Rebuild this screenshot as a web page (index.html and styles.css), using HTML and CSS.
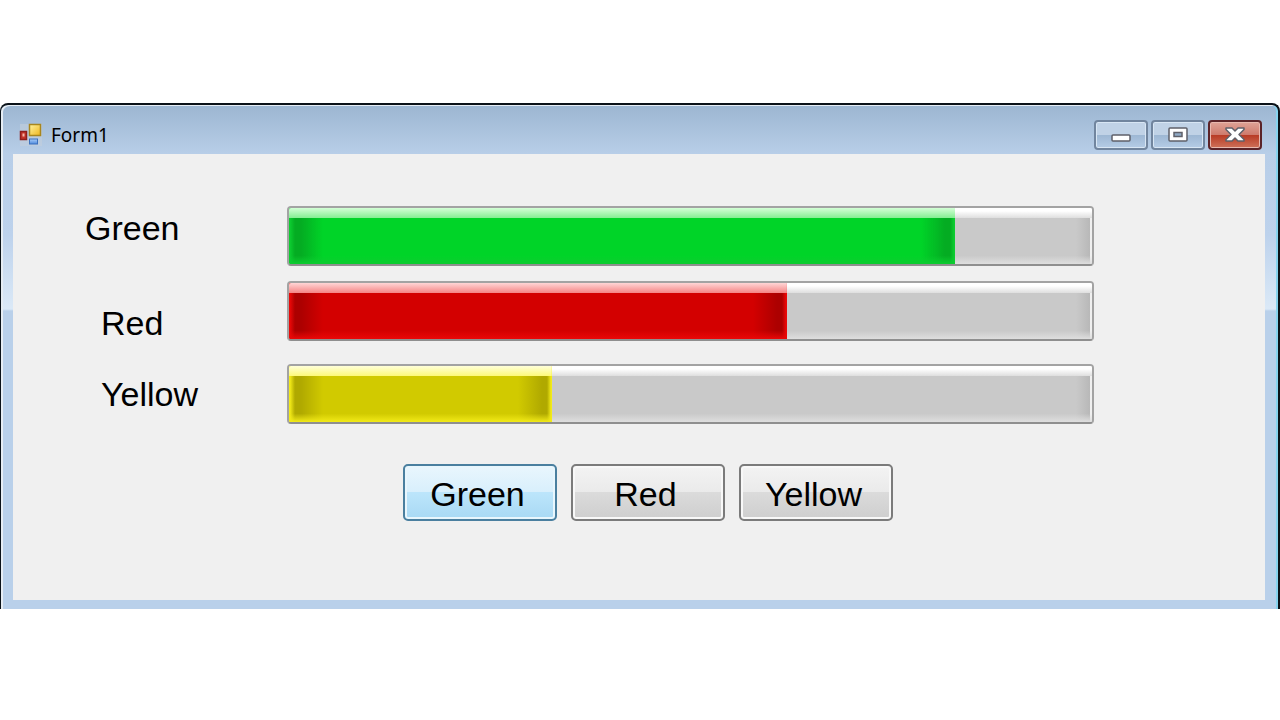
FILE: index.html
```
<!DOCTYPE html>
<html lang="en">
<head>
  <meta charset="UTF-8" />
  <meta name="viewport" content="width=device-width, initial-scale=1.0"/>
  <title>Form1</title>
  <link rel="stylesheet" href="styles.css">
</head>
<body>

  <div class="window">
    <!-- TITLE BAR -->
    <header class="title-bar">
      <svg class="app-icon" width="24" height="24" viewBox="0 0 24 24" aria-hidden="true">
        <defs>
          <linearGradient id="gold" x1="0" y1="0" x2="1" y2="1">
            <stop offset="0" stop-color="#fff3a0"/>
            <stop offset="1" stop-color="#eeb51c"/>
          </linearGradient>
          <linearGradient id="blue" x1="0" y1="0" x2="0" y2="1">
            <stop offset="0" stop-color="#a9cdf7"/>
            <stop offset="1" stop-color="#4f8ade"/>
          </linearGradient>
        </defs>
        <rect x="1" y="1" width="22" height="22" fill="#c3cfdc" opacity="0.6"/>
        <rect x="10.500" y="1.500" width="11" height="11" fill="url(#gold)" stroke="#a8861f" stroke-width="1.500"/>
        <rect x="1.500" y="8.500" width="6" height="8" fill="#c5352a" stroke="#8f1f1c" stroke-width="1.500"/>
        <rect x="3.500" y="10.500" width="2" height="3" fill="#f3b5a8"/>
        <rect x="10.500" y="16" width="8" height="5" fill="url(#blue)" stroke="#3c70bd"/>
      </svg>
      <h1>Form1</h1>
      <div class="controls">
        <button type="button" class="control" aria-label="Minimize">
          <svg width="22" height="20" viewBox="0 0 22 20">
            <rect x="2" y="10" width="18" height="6" rx="1" fill="#fff" stroke="#5f6069" stroke-width="1.5"/>
          </svg>
        </button>
        <button type="button" class="control" aria-label="Maximize">
          <svg width="22" height="20" viewBox="0 0 22 20">
            <rect x="2" y="3" width="18" height="13" rx="1" fill="#fff" stroke="#5f6069" stroke-width="1.5"/>
            <rect x="7" y="7.500" width="8" height="4" fill="#8fa9c5" stroke="#5f6069" stroke-width="1.5"/>
          </svg>
        </button>
        <button type="button" class="control close" aria-label="Close">
          <svg width="22" height="20" viewBox="0 0 22 20">
            <path d="M2 3H8L11 6L14 3H20V4.500L15 9.500L20 14.500V16H14L11 13L8 16H2V14.500L7 9.500L2 4.500Z" fill="#fff" stroke="#5f6069" stroke-width="1.5" stroke-linejoin="round"/>
          </svg>
        </button>
      </div>
    </header>

    <!-- FORM -->
    <main class="client">
      <div class="row row-green">
        <label for="bar-green">Green</label>
        <progress id="bar-green" max="100" value="83"></progress>
      </div>
      <div class="row row-red">
        <label for="bar-red">Red</label>
        <progress id="bar-red" max="100" value="62"></progress>
      </div>
      <div class="row row-yellow">
        <label for="bar-yellow">Yellow</label>
        <progress id="bar-yellow" max="100" value="32.7"></progress>
      </div>

      <div class="buttons">
        <button type="button" class="btn active">Green</button>
        <button type="button" class="btn">Red</button>
        <button type="button" class="btn">Yellow</button>
      </div>
    </main>
  </div>

</body>
</html>
```

FILE: styles.css
```
* {
  box-sizing: border-box;
}

body {
  font-family: "Liberation Sans", Arial, sans-serif;
  margin: 0;
  padding-top: 103px;
  background: #fff;
}

.window {
  padding: 0 13px 9px 12px;
  border: 2px solid #0b1218;
  border-left-width: 1px;
  border-bottom: none;
  border-radius: 8px 8px 0 0;
  background: linear-gradient(#9cb6d1 0, #b8cee8 49px, #bdd2ec 130px, #dbe9f7 204px, #b9d0ea 206px);
  box-shadow: inset 2px 1px 0 #e6edf4, inset -2px 0 0 #86d3ee;
}

/* Title bar */
.title-bar {
  display: flex;
  align-items: center;
  height: 49px;
  padding: 10px 3px 0 6px;
}

.title-bar h1 {
  flex: 1;
  margin: 0 0 0 8px;
  font-family: "Noto Sans", sans-serif;
  font-size: 19px;
  font-weight: 400;
  line-height: 24px;
}

.controls {
  display: flex;
  gap: 3px;
}

.control {
  display: flex;
  align-items: center;
  justify-content: center;
  width: 54px;
  height: 30px;
  padding: 0;
  border: 2px solid #71859e;
  border-radius: 4px;
  background: linear-gradient(#c0d2e6 50%, #9db7d3 50%, #b5cce6);
  box-shadow: inset 0 0 0 1px #d8e6f4;
}

.control.close {
  border-color: #5b2328;
  background: linear-gradient(#dfa397, #ce7a6c 50%, #b83a24 50%, #cf7159);
  box-shadow: inset 0 0 0 1px #e8b8ae;
}

/* Form area */
.client {
  padding: 52px 171px 79px 0;
  background: #f0f0f0;
  color: #000;
  font-size: 34px;
  line-height: 36px;
}

.row {
  display: flex;
  align-items: center;
}

.row label {
  width: 274px;
  padding-left: 88px;
}

.row-green label {
  align-self: flex-start;
  padding-top: 4px;
  padding-left: 72px;
}

.row-red {
  margin-top: 15px;
}

.row-red label {
  align-self: flex-end;
}

.row-yellow {
  margin-top: 23px;
}

progress {
  appearance: none;
  flex: 1;
  min-width: 0;
  height: 60px;
  border: 2px solid #a3a3a3;
  border-bottom-color: #8f8f8f;
  border-radius: 4px;
  background: #c9c9c9;
  overflow: hidden;
}

progress::-webkit-progress-bar {
  background:
    linear-gradient(#fff, #fff 30%, #dedede) top / 100% 10px no-repeat,
    linear-gradient(transparent 85%, #dedede),
    linear-gradient(to left, #f0f0f0 2px, #b8b8b8 2px, transparent 16px),
    #c9c9c9;
}

progress::-webkit-progress-value {
  background:
    linear-gradient(var(--gloss-top), var(--gloss-bottom)) top / 100% 10px no-repeat,
    linear-gradient(transparent 85%, var(--glow)),
    linear-gradient(to right, var(--glow) 1px, var(--shade) 6px, var(--shade) 12px, transparent 34px),
    linear-gradient(to left, var(--glow) 1px, var(--shade) 5px, var(--shade) 10px, transparent 34px),
    var(--fill);
}

.row-green {
  --fill: #00d428;
  --shade: #04ac22;
  --glow: #0ccc30;
  --gloss-top: #d4ffd6;
  --gloss-bottom: #84ee92;
}

.row-red {
  --fill: #d30000;
  --shade: #ac0000;
  --glow: #ea0808;
  --gloss-top: #ffd6d6;
  --gloss-bottom: #f58484;
}

.row-yellow {
  --fill: #d1ca00;
  --shade: #b0a900;
  --glow: #f2ea18;
  --gloss-top: #ffffd8;
  --gloss-bottom: #fdf978;
}

/* Buttons */
.buttons {
  display: flex;
  justify-content: center;
  gap: 14px;
  margin-top: 40px;
  padding-left: 189px;
}

.btn {
  width: 154px;
  height: 57px;
  padding: 2px 5px 0 0;
  border: 2px solid #7b7b7b;
  border-radius: 5px;
  background: linear-gradient(#f3f3f3, #eaeaea 50%, #dbdbdb 50%, #cecece);
  box-shadow: inset 0 0 0 2px #f8f8f8;
  color: #000;
  font-family: inherit;
  font-size: 34px;
  line-height: 36px;
}

.btn.active {
  border-color: #4a7f9f;
  background: linear-gradient(#e9f6fd, #d8effc 50%, #bce5fb 50%, #a8d9f4);
  box-shadow: inset 0 0 0 2px #e8f6fd;
}
```
